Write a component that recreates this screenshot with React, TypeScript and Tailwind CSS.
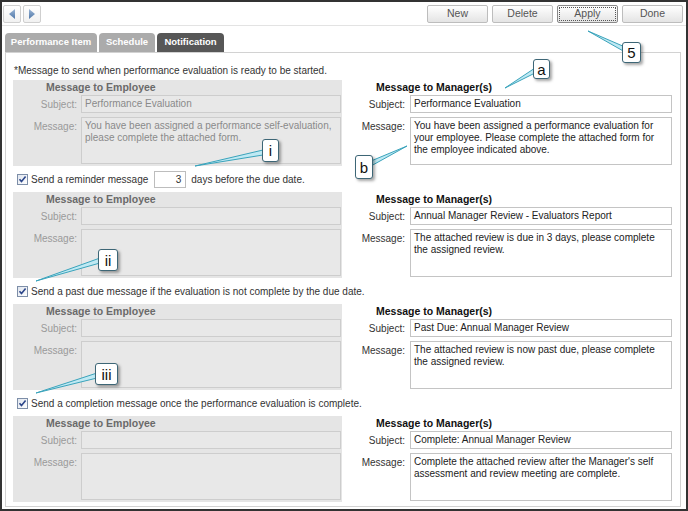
import React from 'react';

const font = { fontFamily: '"Liberation Sans", Arial, sans-serif' };

function NavButton({ dir }: { dir: 'left' | 'right' }) {
  return (
    <div className="w-[18px] h-[18px] border border-[#cfcfcf] rounded-[2px] bg-gradient-to-b from-white to-[#f1f1f1] flex items-center justify-center">
      <svg width="10" height="12" viewBox="0 0 10 12">
        <defs>
          <linearGradient id={`nav-${dir}`} x1="0" y1="0" x2="0" y2="1">
            <stop offset="0" stopColor="#9bb6d6" />
            <stop offset="1" stopColor="#4f77a8" />
          </linearGradient>
        </defs>
        {dir === 'left' ? (
          <polygon points="8,1 8,11 2,6" fill={`url(#nav-${dir})`} />
        ) : (
          <polygon points="2,1 2,11 8,6" fill={`url(#nav-${dir})`} />
        )}
      </svg>
    </div>
  );
}

function ToolButton({ label, focused }: { label: string; focused?: boolean }) {
  return (
    <div
      className={`w-[61px] h-[18px] rounded-[2px] border bg-gradient-to-b from-white to-[#e4e4e4] flex items-center justify-center text-[10.5px] text-[#555] ${
        focused ? 'border-[#8a8a8a] outline-1 outline-dotted outline-offset-[-3px] outline-[#555]' : 'border-[#bdbdbd]'
      }`}
    >
      {label}
    </div>
  );
}

function Tab({ label, active, w }: { label: string; active?: boolean; w: string }) {
  return (
    <div
      className={`${w} h-[19px] rounded-t-[4px] flex items-center justify-center text-[9.5px] font-bold text-white ${
        active ? 'bg-[#575757]' : 'bg-[#ababab]'
      }`}
    >
      {label}
    </div>
  );
}

function Checkbox() {
  return (
    <svg width="11" height="11" viewBox="0 0 11 11">
      <defs>
        <linearGradient id="cb" x1="0" y1="0" x2="1" y2="1">
          <stop offset="0" stopColor="#dfe5ee" />
          <stop offset="1" stopColor="#ffffff" />
        </linearGradient>
      </defs>
      <rect x="0.5" y="0.5" width="10" height="10" fill="url(#cb)" stroke="#7d8ea8" />
      <path d="M2.5 5.2 L4.5 7.6 L8.6 2.6" fill="none" stroke="#2c468a" strokeWidth="1.6" />
    </svg>
  );
}

type Msg = { subject: string; message: string };

function EmployeeBox({ data }: { data: Msg }) {
  return (
    <div className="w-[329px] h-[86px] bg-[#e5e5e5] shrink-0">
      <div className="h-[14px] pl-[33px] flex items-center text-[10.5px] font-bold text-[#6a6a6a] leading-none">
        Message to Employee
      </div>
      <div className="mt-[1px] flex items-center gap-[4px]">
        <div className="w-[64px] text-right text-[10px] text-[#9a9a9a]">Subject:</div>
        <div className="w-[260px] h-[18px] border border-[#cdcdcd] bg-[#e8e8e8] px-[3px] text-[10px] leading-[16px] text-[#8a8a8a]">
          {data.subject}
        </div>
      </div>
      <div className="mt-[4px] flex items-start gap-[4px]">
        <div className="w-[64px] text-right text-[10px] text-[#9a9a9a] pt-[2px]">Message:</div>
        <div className="w-[260px] h-[47px] border border-[#cdcdcd] bg-[#e8e8e8] px-[3px] pt-[2px] text-[10px] leading-[12px] text-[#8a8a8a]">
          {data.message}
        </div>
      </div>
    </div>
  );
}

function ManagerBlock({ data }: { data: Msg }) {
  return (
    <div className="h-[86px] flex-1">
      <div className="h-[14px] pl-[34px] flex items-center text-[10.5px] font-bold text-[#111] leading-none">
        Message to Manager(s)
      </div>
      <div className="mt-[1px] flex items-center gap-[5px]">
        <div className="w-[63px] text-right text-[10px] text-[#333]">Subject:</div>
        <div className="w-[262px] h-[18px] border border-[#c4c4c4] bg-white px-[3px] text-[10px] leading-[16px] text-[#222]">
          {data.subject}
        </div>
      </div>
      <div className="mt-[4px] flex items-start gap-[5px]">
        <div className="w-[63px] text-right text-[10px] text-[#333] pt-[2px]">Message:</div>
        <div className="w-[262px] h-[48px] border border-[#c4c4c4] bg-white px-[3px] pt-[2px] text-[10px] leading-[12px] text-[#222]">
          {data.message}
        </div>
      </div>
    </div>
  );
}

const sections: { employee: Msg; manager: Msg; check?: React.ReactNode }[] = [
  {
    employee: {
      subject: 'Performance Evaluation',
      message: 'You have been assigned a performance self-evaluation, please complete the attached form.',
    },
    manager: {
      subject: 'Performance Evaluation',
      message:
        'You have been assigned a performance evaluation for your employee. Please complete the attached form for the employee indicated above.',
    },
    check: (
      <>
        <span>Send a reminder message</span>
        <div className="ml-[6px] w-[32px] h-[17px] border border-[#bdbdbd] bg-white text-right pr-[4px] leading-[15px]">3</div>
        <span className="ml-[5px]">days before the due date.</span>
      </>
    ),
  },
  {
    employee: { subject: '', message: '' },
    manager: {
      subject: 'Annual Manager Review - Evaluators Report',
      message: 'The attached review is due in 3 days, please complete the assigned review.',
    },
    check: <span>Send a past due message if the evaluation is not complete by the due date.</span>,
  },
  {
    employee: { subject: '', message: '' },
    manager: {
      subject: 'Past Due: Annual Manager Review',
      message: 'The attached review is now past due, please complete the assigned review.',
    },
    check: <span>Send a completion message once the performance evaluation is complete.</span>,
  },
  {
    employee: { subject: '', message: '' },
    manager: {
      subject: 'Complete: Annual Manager Review',
      message: "Complete the attached review after the Manager's self assessment and review meeting are complete.",
    },
  },
];

const callouts = [
  { label: '5', box: 'left-[622px] top-[42px] w-[19px] h-[21px]', wedge: '588,31 625,47 625,52' },
  { label: 'a', box: 'left-[533px] top-[59px] w-[17px] h-[20px]', wedge: '505,88 535,68 535,73' },
  { label: 'b', box: 'left-[355px] top-[155px] w-[18px] h-[24px]', wedge: '407,146 371,161 371,166' },
  { label: 'i', box: 'left-[262px] top-[139px] w-[17px] h-[23px]', wedge: '195,166 263,150 263,155' },
  { label: 'ii', box: 'left-[98px] top-[249px] w-[20px] h-[22px]', wedge: '36,281 100,258 100,263' },
  { label: 'iii', box: 'left-[95px] top-[363px] w-[23px] h-[22px]', wedge: '36,393 97,373 97,378' },
];

export default function App() {
  return (
    <div className="relative w-[688px] h-[511px] overflow-hidden bg-white" style={font}>
      <div className="w-full h-full border-2 border-[#333] flex flex-col">
        {/* Toolbar */}
        <div className="h-[24px] shrink-0 border-b border-[#e3e3e3] flex items-center justify-between pl-[1px] pr-[3px]">
          <div className="flex gap-[2px]">
            <NavButton dir="left" />
            <NavButton dir="right" />
          </div>
          <div className="flex gap-[4px]">
            <ToolButton label="New" />
            <ToolButton label="Delete" />
            <ToolButton label="Apply" focused />
            <ToolButton label="Done" />
          </div>
        </div>

        {/* Tabs */}
        <div className="mt-[7px] pl-[3px] flex gap-[2px] shrink-0">
          <Tab label="Performance Item" w="w-[92px]" />
          <Tab label="Schedule" w="w-[56px]" />
          <Tab label="Notification" w="w-[67px]" active />
        </div>

        {/* Panel */}
        <div className="ml-[3px] mb-[2px] w-[676px] flex-1 border border-[#d2d2d2] pl-[7px]">
          <div className="h-[27px] flex items-end pb-[3px] pl-[1px] text-[10px] leading-[12px] text-[#333]">
            *Message to send when performance evaluation is ready to be started.
          </div>
          {sections.map((s, i) => (
            <div key={i}>
              <div className="flex">
                <EmployeeBox data={s.employee} />
                <ManagerBlock data={s.manager} />
              </div>
              {s.check && (
                <div className="h-[26px] pl-[4px] flex items-center text-[10px] text-[#333]">
                  <Checkbox />
                  <div className="ml-[3px] flex items-center">{s.check}</div>
                </div>
              )}
            </div>
          ))}
        </div>
      </div>

      {/* Callouts */}
      <svg className="absolute left-0 top-0 pointer-events-none" width="688" height="511">
        {callouts.map((c) => (
          <polygon key={c.label} points={c.wedge} fill="#bfe9f3" stroke="#3aa3bb" strokeWidth="1" strokeLinejoin="round" />
        ))}
      </svg>
      {callouts.map((c) => (
        <div
          key={c.label}
          className={`absolute ${c.box} bg-white border-[1.5px] border-[#3d6676] rounded-[3px] shadow-[2px_2px_3px_rgba(0,0,0,0.35)] flex items-center justify-center text-[15px] leading-none text-[#111]`}
        >
          {c.label}
        </div>
      ))}
    </div>
  );
}
